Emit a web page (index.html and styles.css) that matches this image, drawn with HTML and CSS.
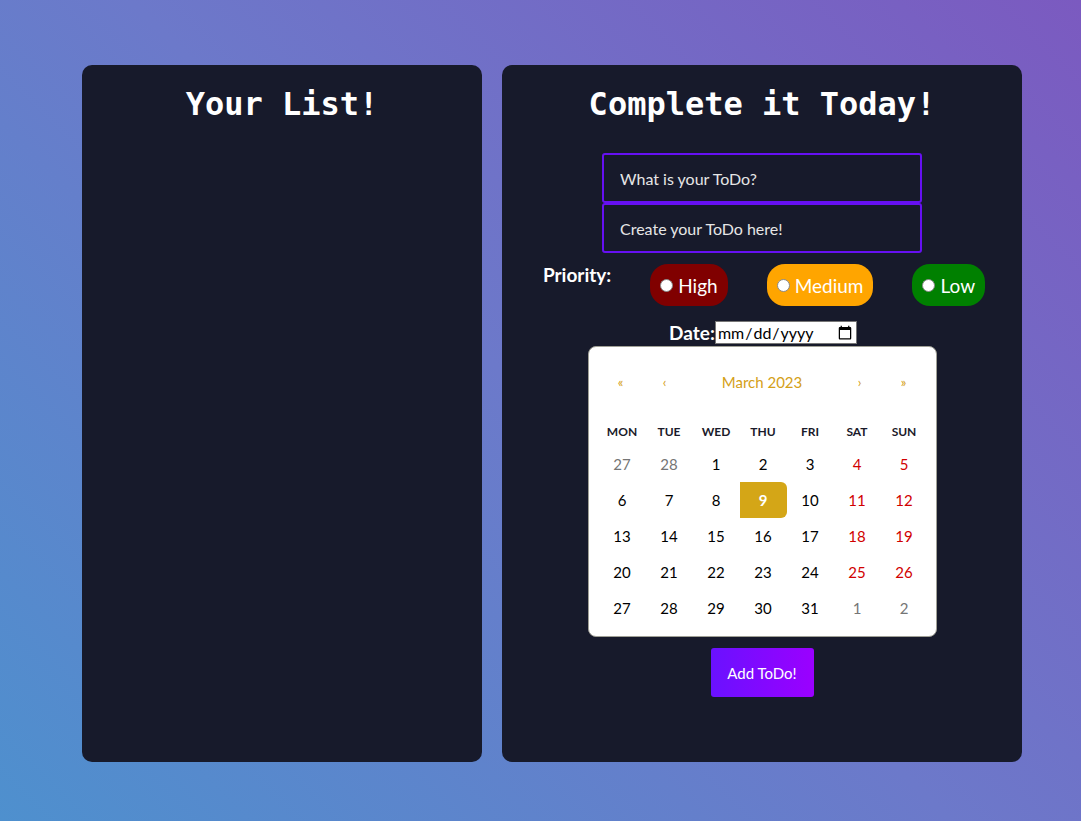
FILE: index.html
```html
<!DOCTYPE html>
<html>
<head>
<meta charset="utf-8">
<link rel="stylesheet" href="styles.css">
</head>
<body>
<div class="page">
  <section class="card list-card">
    <h1 class="title">Your List!</h1>
  </section>
  <section class="card form-card">
    <h1 class="title">Complete it Today!</h1>
    <div class="fields">
      <input class="field" type="text" placeholder="What is your ToDo?">
      <input class="field" type="text" placeholder="Create your ToDo here!">
    </div>
    <div class="priority">
      <span class="priority-label">Priority:</span>
      <label class="pill high"><span class="dot"></span>High</label>
      <label class="pill medium"><span class="dot"></span>Medium</label>
      <label class="pill low"><span class="dot"></span>Low</label>
    </div>
    <div class="date-row">
      <span class="date-label">Date:</span>
      <input class="date-input" type="date">
    </div>
    <div class="calendar">
      <div class="cal-nav">
        <span class="nav-btn">«</span>
        <span class="nav-btn">‹</span>
        <span class="nav-month">March 2023</span>
        <span class="nav-btn">›</span>
        <span class="nav-btn">»</span>
      </div>
      <div class="cal-grid weekdays">
        <span>MON</span><span>TUE</span><span>WED</span><span>THU</span><span>FRI</span><span>SAT</span><span>SUN</span>
      </div>
      <div class="cal-grid days">
        <span class="other">27</span><span class="other">28</span><span>1</span><span>2</span><span>3</span><span class="we">4</span><span class="we">5</span>
        <span>6</span><span>7</span><span>8</span><span class="today">9</span><span>10</span><span class="we">11</span><span class="we">12</span>
        <span>13</span><span>14</span><span>15</span><span>16</span><span>17</span><span class="we">18</span><span class="we">19</span>
        <span>20</span><span>21</span><span>22</span><span>23</span><span>24</span><span class="we">25</span><span class="we">26</span>
        <span>27</span><span>28</span><span>29</span><span>30</span><span>31</span><span class="other">1</span><span class="other">2</span>
      </div>
    </div>
    <button class="add-btn">Add ToDo!</button>
  </section>
</div>
</body>
</html>
```

FILE: styles.css
```css
* { box-sizing: border-box; }
html, body { margin: 0; height: 100%; }
body {
  background: linear-gradient(45deg, #4e90ce 0%, #6c79ca 50%, #7b5ac0 100%);
  font-family: "Lato", "DejaVu Sans", sans-serif;
  overflow: hidden;
}
.page {
  display: flex;
  gap: 20px;
  padding: 65px 0 0 82px;
  align-items: flex-start;
}
.card {
  background: #171a2b;
  border-radius: 10px;
  height: 697px;
  padding-top: 20px;
  display: flex;
  flex-direction: column;
  align-items: center;
}
.list-card { width: 400px; }
.form-card { width: 520px; }
.title {
  margin: 0;
  font-family: "DejaVu Sans Mono", monospace;
  font-weight: bold;
  font-size: 32px;
  line-height: 38px;
  color: #ffffff;
}
.fields {
  margin-top: 30px;
  display: flex;
  flex-direction: column;
}
.field {
  width: 320px;
  height: 50px;
  background: #171a2b;
  border: 2px solid #6610f2;
  border-radius: 3px;
  padding: 0 16px;
  font-family: "Lato", "DejaVu Sans", sans-serif;
  font-size: 16px;
  color: #e6e6e6;
  outline: none;
}
.field::placeholder { color: #e6e6e6; }
.priority {
  margin-top: 11px;
  display: flex;
  align-items: flex-start;
  gap: 39px;
  margin-left: 4px;
}
.priority-label {
  color: #fff;
  font-weight: bold;
  font-size: 19px;
  line-height: 22px;
}
.pill {
  display: flex;
  align-items: center;
  gap: 5px;
  height: 42px;
  padding: 0 10px;
  border-radius: 18px;
  color: #fff;
  font-size: 19px;
}
.high { background: #800000; }
.medium { background: #ffa500; }
.low { background: #008000; }
.dot {
  width: 13px;
  height: 13px;
  border-radius: 50%;
  background: #fff;
  border: 1px solid #8a8a8a;
}
.date-row {
  margin-top: 15px;
  display: flex;
  align-items: center;
  margin-left: 2px;
}
.date-label {
  color: #fff;
  font-weight: bold;
  font-size: 19px;
}
.date-input {
  width: 142px;
  height: 23px;
  padding: 0 1px;
  font-family: "Lato", "DejaVu Sans", sans-serif;
  font-size: 16px;
  border: 1px solid #767676;
  border-radius: 0;
  background: #fff;
  color: #000;
}
.calendar {
  margin-top: 2px;
  width: 349px;
  height: 291px;
  background: #fff;
  border: 1px solid #a0a096;
  border-radius: 8px;
  padding: 20px 10px 0;
}
.cal-nav {
  display: grid;
  grid-template-columns: 44px 44px 1fr 44px 44px;
  height: 30px;
  align-items: center;
  color: #d4a017;
  text-align: center;
  margin-bottom: 21px;
}
.nav-btn { font-size: 13px; }
.nav-month { font-size: 15px; }
.cal-grid {
  display: grid;
  grid-template-columns: repeat(7, 47px);
  text-align: center;
}
.weekdays span {
  font-size: 12px;
  font-weight: bold;
  color: #1a1a2a;
  height: 28px;
  line-height: 28px;
}
.days { grid-auto-rows: 36px; }
.days span {
  font-size: 15px;
  line-height: 36px;
  color: #000;
}
.days .we { color: #d10000; }
.days .other { color: #757575; }
.days .today {
  background: #d4a617;
  color: #fff;
  font-weight: bold;
  border-radius: 0 6px 6px 0;
}
.add-btn {
  margin-top: 11px;
  width: 103px;
  height: 49px;
  border: none;
  border-radius: 3px;
  background: linear-gradient(to right, #6a11ff, #9b00ff);
  color: #fff;
  font-family: "Lato", "DejaVu Sans", sans-serif;
  font-size: 15px;
}
```
